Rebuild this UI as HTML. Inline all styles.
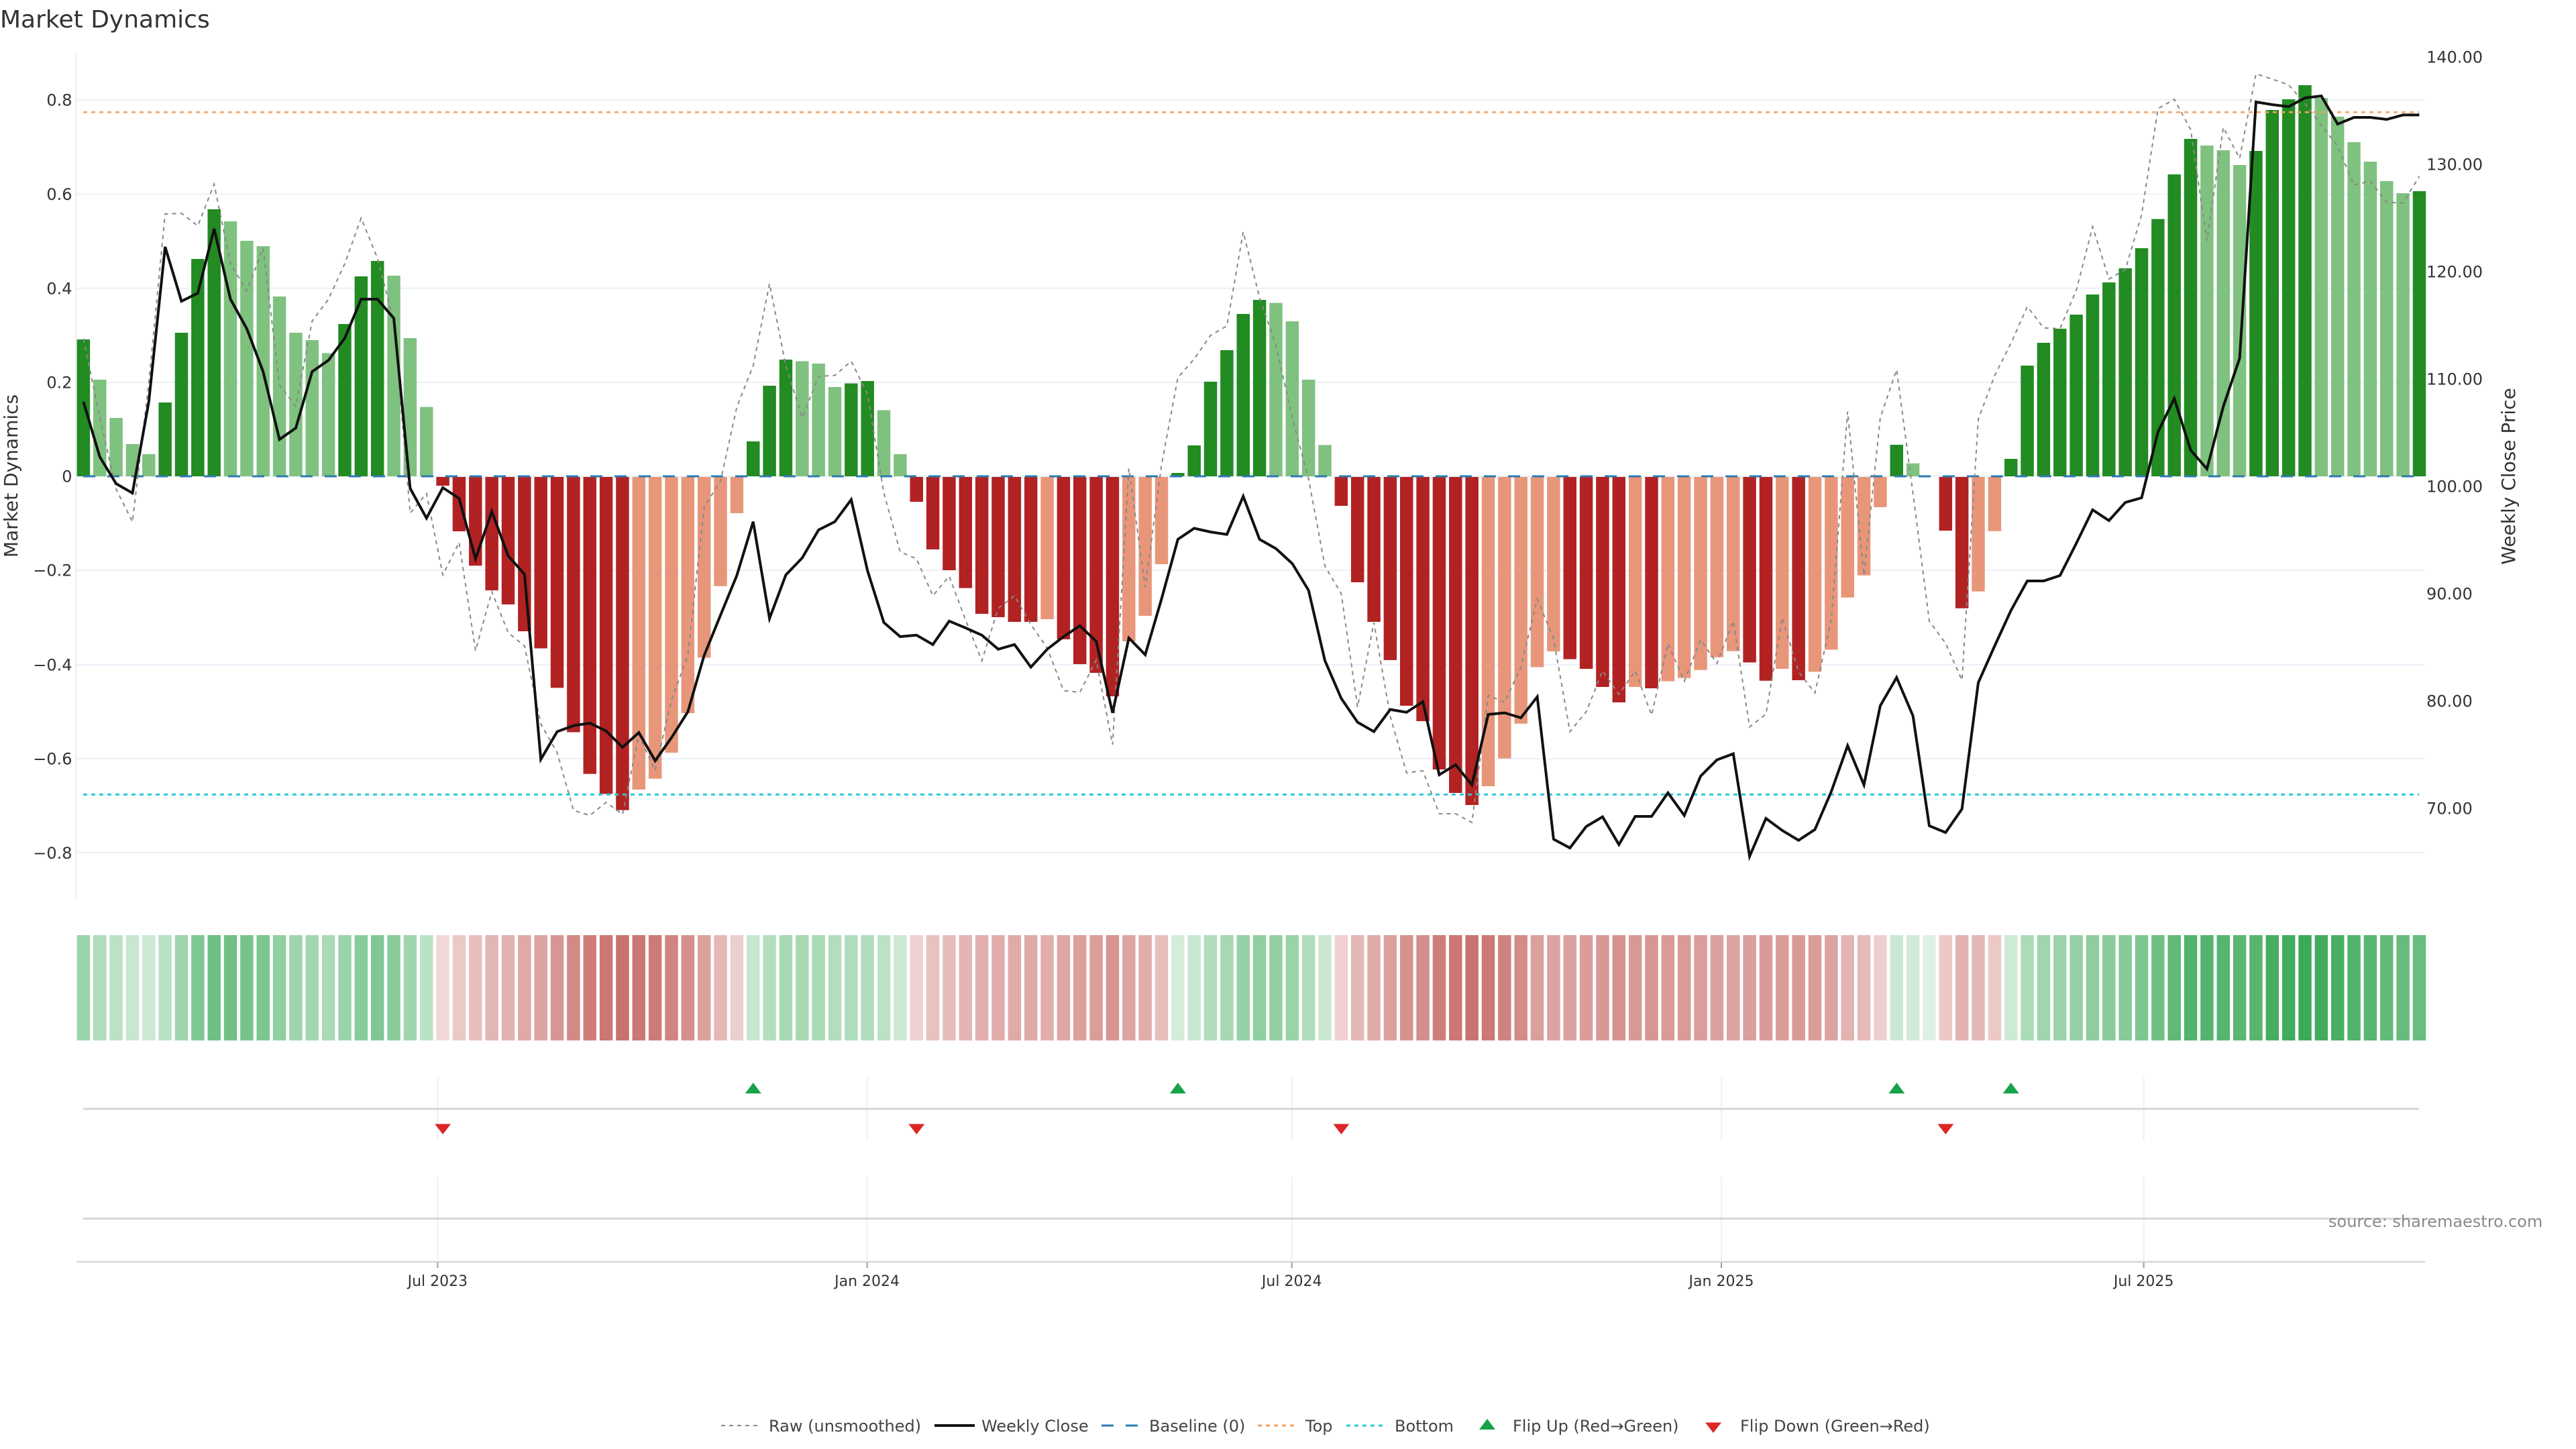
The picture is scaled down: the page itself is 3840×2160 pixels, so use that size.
<!DOCTYPE html>
<html lang="en"><head><meta charset="utf-8"><title>Market Dynamics</title>
<style>
html,body{margin:0;padding:0;background:#fff}
svg{display:block}
text{font-family:"DejaVu Sans",sans-serif;fill:#333}
.ns{fill:none;vector-effect:non-scaling-stroke}
.t{font-size:24px}
.l{font-size:24px;fill:#444}
.x{font-size:22px;text-anchor:middle}
</style></head><body>
<svg xmlns="http://www.w3.org/2000/svg" width="3840" height="2160" viewBox="0 0 3840 2160">
<rect width="3840" height="2160" fill="#fff"/>
<text x="0" y="41" style="font-size:36px">Market Dynamics</text>

<g stroke="#ebf0f8" stroke-width="2" fill="none">
<path d="M114 148.8H3615M114 289.5H3615M114 429.7H3615M114 570H3615M114 710H3615M114 850H3615M114 991H3615M114 1131H3615M114 1271H3615"/>
<path d="M113.5 80V1339" stroke-width="2.5"/>
<path d="M652.4 1606V1700M1292.6 1606V1700M1925.7 1606V1700M2566 1606V1700M3195.6 1606V1700M652.4 1754V1881M1292.6 1754V1881M1925.7 1754V1881M2566 1754V1881M3195.6 1754V1881"/>
</g>

<g transform="translate(124.4 0) scale(24.35 1)" fill="none" stroke-width=".8">
<path stroke="#228b22" d="M0 506V710M5 600V710M6 496V710M7 386V710M8 312V710M16 483V710M17 412V710M18 389V710M41 658V710M42 575V710M43 536V710M47 571.5V710M48 568V710M67 705V710M68 664V710M69 569V710M70 522V710M71 468V710M72 447V710M111 663V710M118 684V710M119 545V710M120 511V710M121 490V710M122 469V710M123 439V710M124 421V710M125 400V710M126 370V710M127 326.5V710M128 260V710M129 207V710M133 225V710M134 164V710M135 148V710M136 127V710M143 285V710"/>
<path stroke="#7fc17f" d="M1 566V710M2 623V710M3 662V710M4 677V710M9 330V710M10 359V710M11 367V710M12 442V710M13 496V710M14 507V710M15 526.5V710M19 411V710M20 504V710M21 606.6V710M44 538.5V710M45 542V710M46 577V710M49 611.5V710M50 677V710M73 451.5V710M74 479V710M75 566V710M76 663.4V710M112 690.7V710M130 217V710M131 224V710M132 246V710M137 146V710M138 174V710M139 212V710M140 241V710M141 270V710M142 288V710"/>
<path stroke="#b22222" d="M22 711V724M23 711V792M24 711V843.3M25 711V880M26 711V901M27 711V941M28 711V966.5M29 711V1025.4M30 711V1091.5M31 711V1153.6M32 711V1183.5M33 711V1207.6M51 711V748M52 711V819M53 711V850M54 711V876.6M55 711V915M56 711V920M57 711V927M58 711V927M60 711V953M61 711V990M62 711V1003M63 711V1038M77 711V754M78 711V868M79 711V927M80 711V984M81 711V1052M82 711V1075M83 711V1147M84 711V1182M85 711V1200M91 711V982.6M92 711V997M93 711V1024M94 711V1047M96 711V1026M102 711V987.5M103 711V1014.8M105 711V1014M114 711V791M115 711V906.8"/>
<path stroke="#e8967a" d="M34 711V1177M35 711V1160.7M36 711V1122M37 711V1063M38 711V980.5M39 711V873.8M40 711V765M59 711V923M64 711V956M65 711V918M66 711V841M86 711V1172M87 711V1130.6M88 711V1078.7M89 711V994.5M90 711V971M95 711V1024M97 711V1015.5M98 711V1010.6M99 711V998.7M100 711V979.8M101 711V970.6M104 711V997M106 711V1001.5M107 711V968.5M108 711V890.7M109 711V857.7M110 711V756M116 711V881.6M117 711V791.8"/>

<g stroke="#189a3a">
<path d="M0 1394V1551" stroke-opacity=".43"/><path d="M1 1394V1551" stroke-opacity=".34"/><path d="M2 1394V1551" stroke-opacity=".29"/><path d="M3 1394V1551" stroke-opacity=".24"/><path d="M4 1394V1551" stroke-opacity=".22"/><path d="M5 1394V1551" stroke-opacity=".3"/><path d="M6 1394V1551" stroke-opacity=".42"/><path d="M7 1394V1551" stroke-opacity=".55"/><path d="M8 1394V1551" stroke-opacity=".63"/><path d="M9 1394V1551" stroke-opacity=".62"/><path d="M10 1394V1551" stroke-opacity=".59"/><path d="M11 1394V1551" stroke-opacity=".57"/><path d="M12 1394V1551" stroke-opacity=".48"/><path d="M13 1394V1551" stroke-opacity=".42"/><path d="M14 1394V1551" stroke-opacity=".4"/><path d="M15 1394V1551" stroke-opacity=".37"/><path d="M16 1394V1551" stroke-opacity=".43"/><path d="M17 1394V1551" stroke-opacity=".51"/><path d="M18 1394V1551" stroke-opacity=".55"/><path d="M19 1394V1551" stroke-opacity=".51"/><path d="M20 1394V1551" stroke-opacity=".41"/><path d="M21 1394V1551" stroke-opacity=".29"/>
<path d="M41 1394V1551" stroke-opacity=".24"/><path d="M42 1394V1551" stroke-opacity=".33"/><path d="M43 1394V1551" stroke-opacity=".38"/><path d="M44 1394V1551" stroke-opacity=".38"/><path d="M45 1394V1551" stroke-opacity=".37"/><path d="M46 1394V1551" stroke-opacity=".33"/><path d="M47 1394V1551" stroke-opacity=".34"/><path d="M48 1394V1551" stroke-opacity=".34"/><path d="M49 1394V1551" stroke-opacity=".29"/><path d="M50 1394V1551" stroke-opacity=".22"/>
<path d="M67 1394V1551" stroke-opacity=".19"/><path d="M68 1394V1551" stroke-opacity=".23"/><path d="M69 1394V1551" stroke-opacity=".34"/><path d="M70 1394V1551" stroke-opacity=".39"/><path d="M71 1394V1551" stroke-opacity=".46"/><path d="M72 1394V1551" stroke-opacity=".48"/><path d="M73 1394V1551" stroke-opacity=".47"/><path d="M74 1394V1551" stroke-opacity=".44"/><path d="M75 1394V1551" stroke-opacity=".34"/><path d="M76 1394V1551" stroke-opacity=".23"/>
<path d="M111 1394V1551" stroke-opacity=".23"/><path d="M112 1394V1551" stroke-opacity=".2"/><path d="M113 1394V1551" stroke-opacity=".14"/>
<path d="M118 1394V1551" stroke-opacity=".21"/><path d="M119 1394V1551" stroke-opacity=".36"/><path d="M120 1394V1551" stroke-opacity=".41"/><path d="M121 1394V1551" stroke-opacity=".43"/><path d="M122 1394V1551" stroke-opacity=".46"/><path d="M123 1394V1551" stroke-opacity=".49"/><path d="M124 1394V1551" stroke-opacity=".51"/><path d="M125 1394V1551" stroke-opacity=".53"/><path d="M126 1394V1551" stroke-opacity=".57"/><path d="M127 1394V1551" stroke-opacity=".62"/><path d="M128 1394V1551" stroke-opacity=".69"/><path d="M129 1394V1551" stroke-opacity=".75"/><path d="M130 1394V1551" stroke-opacity=".74"/><path d="M131 1394V1551" stroke-opacity=".73"/><path d="M132 1394V1551" stroke-opacity=".71"/><path d="M133 1394V1551" stroke-opacity=".73"/><path d="M134 1394V1551" stroke-opacity=".8"/><path d="M135 1394V1551" stroke-opacity=".82"/><path d="M136 1394V1551" stroke-opacity=".84"/><path d="M137 1394V1551" stroke-opacity=".82"/><path d="M138 1394V1551" stroke-opacity=".79"/><path d="M139 1394V1551" stroke-opacity=".75"/><path d="M140 1394V1551" stroke-opacity=".72"/><path d="M141 1394V1551" stroke-opacity=".68"/><path d="M142 1394V1551" stroke-opacity=".66"/><path d="M143 1394V1551" stroke-opacity=".65"/>
</g>
<g stroke="#b02e28">
<path d="M22 1394V1551" stroke-opacity=".18"/><path d="M23 1394V1551" stroke-opacity=".26"/><path d="M24 1394V1551" stroke-opacity=".31"/><path d="M25 1394V1551" stroke-opacity=".35"/><path d="M26 1394V1551" stroke-opacity=".37"/><path d="M27 1394V1551" stroke-opacity=".41"/><path d="M28 1394V1551" stroke-opacity=".44"/><path d="M29 1394V1551" stroke-opacity=".5"/><path d="M30 1394V1551" stroke-opacity=".56"/><path d="M31 1394V1551" stroke-opacity=".62"/><path d="M32 1394V1551" stroke-opacity=".65"/><path d="M33 1394V1551" stroke-opacity=".68"/><path d="M34 1394V1551" stroke-opacity=".65"/><path d="M35 1394V1551" stroke-opacity=".63"/><path d="M36 1394V1551" stroke-opacity=".59"/><path d="M37 1394V1551" stroke-opacity=".53"/><path d="M38 1394V1551" stroke-opacity=".45"/><path d="M39 1394V1551" stroke-opacity=".34"/><path d="M40 1394V1551" stroke-opacity=".23"/>
<path d="M51 1394V1551" stroke-opacity=".22"/><path d="M52 1394V1551" stroke-opacity=".29"/><path d="M53 1394V1551" stroke-opacity=".32"/><path d="M54 1394V1551" stroke-opacity=".35"/><path d="M55 1394V1551" stroke-opacity=".38"/><path d="M56 1394V1551" stroke-opacity=".39"/><path d="M57 1394V1551" stroke-opacity=".4"/><path d="M58 1394V1551" stroke-opacity=".4"/><path d="M59 1394V1551" stroke-opacity=".39"/><path d="M60 1394V1551" stroke-opacity=".42"/><path d="M61 1394V1551" stroke-opacity=".46"/><path d="M62 1394V1551" stroke-opacity=".47"/><path d="M63 1394V1551" stroke-opacity=".51"/><path d="M64 1394V1551" stroke-opacity=".43"/><path d="M65 1394V1551" stroke-opacity=".39"/><path d="M66 1394V1551" stroke-opacity=".31"/>
<path d="M77 1394V1551" stroke-opacity=".22"/><path d="M78 1394V1551" stroke-opacity=".34"/><path d="M79 1394V1551" stroke-opacity=".4"/><path d="M80 1394V1551" stroke-opacity=".45"/><path d="M81 1394V1551" stroke-opacity=".52"/><path d="M82 1394V1551" stroke-opacity=".54"/><path d="M83 1394V1551" stroke-opacity=".62"/><path d="M84 1394V1551" stroke-opacity=".65"/><path d="M85 1394V1551" stroke-opacity=".67"/><path d="M86 1394V1551" stroke-opacity=".64"/><path d="M87 1394V1551" stroke-opacity=".6"/><path d="M88 1394V1551" stroke-opacity=".55"/><path d="M89 1394V1551" stroke-opacity=".46"/><path d="M90 1394V1551" stroke-opacity=".44"/><path d="M91 1394V1551" stroke-opacity=".45"/><path d="M92 1394V1551" stroke-opacity=".47"/><path d="M93 1394V1551" stroke-opacity=".49"/><path d="M94 1394V1551" stroke-opacity=".52"/><path d="M95 1394V1551" stroke-opacity=".49"/><path d="M96 1394V1551" stroke-opacity=".5"/><path d="M97 1394V1551" stroke-opacity=".48"/><path d="M98 1394V1551" stroke-opacity=".48"/><path d="M99 1394V1551" stroke-opacity=".47"/><path d="M100 1394V1551" stroke-opacity=".45"/><path d="M101 1394V1551" stroke-opacity=".44"/><path d="M102 1394V1551" stroke-opacity=".46"/><path d="M103 1394V1551" stroke-opacity=".48"/><path d="M104 1394V1551" stroke-opacity=".47"/><path d="M105 1394V1551" stroke-opacity=".48"/><path d="M106 1394V1551" stroke-opacity=".47"/><path d="M107 1394V1551" stroke-opacity=".44"/><path d="M108 1394V1551" stroke-opacity=".36"/><path d="M109 1394V1551" stroke-opacity=".33"/><path d="M110 1394V1551" stroke-opacity=".23"/>
<path d="M114 1394V1551" stroke-opacity=".26"/><path d="M115 1394V1551" stroke-opacity=".36"/><path d="M116 1394V1551" stroke-opacity=".34"/><path d="M117 1394V1551" stroke-opacity=".26"/>
</g>
</g>

<path d="M124 710H3606" stroke="#2b7bb0" stroke-width="3" stroke-dasharray="18 18" fill="none"/>
<path d="M124 167.3H3606" stroke="#f4a261" stroke-opacity=".9" stroke-width="3" stroke-dasharray="6 6" fill="none"/>
<path d="M124 1184.4H3606" stroke="#2cc8d8" stroke-width="3" stroke-dasharray="6 6" fill="none"/>

<g transform="translate(124.4 0) scale(24.35 1)">
<polyline class="ns" stroke="#888" stroke-width="2" stroke-dasharray="6 6" points="0,505 1,622 2,729 3,778 4,571 5,319 6,318 7,336.7 8,274.5 9,393 10,433.7 11,370 12,574 13,605.6 14,478.6 15,446 16,393 17,325 18,385 19,479.6 20,765 21,735.7 22,857 23,808.5 24,970 25,882 26,943 27,963 28,1079 29,1122 30,1208 31,1215.6 32,1196 33,1214 34,1095 35,1148.6 36,1043.6 37,977 38,756 39,717 40,606.6 41,545.5 42,422.8 43,545.5 44,622.7 45,561 46,559.6 47,538.5 48,587.6 49,735 50,822.6 51,833 52,888 53,859 54,924 55,985 56,906.8 57,888 58,931 59,966 60,1029.6 61,1032 62,984 63,1110 64,698.5 65,875 66,692.8 67,563 68,535 69,500 70,486 71,345.6 72,443.8 73,514 74,622.7 75,714 76,843.7 77,885 78,1054 79,928 80,1068 81,1152 82,1149 83,1213 84,1213 85,1226 86,1036.6 87,1047 88,994.5 89,892.8 90,952 91,1090.6 92,1061 93,1000 94,1035 95,1000 96,1066 97,959 98,1015.5 99,953.8 100,989 101,925.8 102,1083.6 103,1064.6 104,920.8 105,1001.5 106,1033 107,924 108,613.6 109,857.7 110,622.7 111,551 112,735 113,925.8 114,959 115,1014 116,625 117,560 118,511.7 119,457 120,488.8 121,490 122,432.6 123,338 124,416 125,402 126,320 127,162 128,148 129,193 130,358.7 131,190 132,236 133,110 134,118 135,126.5 136,154.6 137,186.7 138,218 139,276 140,270 141,301.5 142,302.6 143,262.8"/>
<polyline class="ns" stroke="#111" stroke-width="4" points="0,599 1,681 2,721 3,735 4,599 5,368 6,449 7,437 8,341 9,446 10,490 11,554 12,655 13,638 14,554 15,537 16,504 17,446 18,446 19,474.5 20,728 21,772.4 22,727 23,743 24,833 25,762.5 26,828.6 27,856 28,1132 29,1090.6 30,1081.7 31,1078 32,1089.7 33,1114 34,1092 35,1134 36,1099.7 37,1061 38,977 39,917 40,857.7 41,777.7 42,922 43,857 44,831.7 45,790 46,777.7 47,744.8 48,850.7 49,928 50,949 51,946.8 52,960.8 53,925.8 54,936 55,946.8 56,967.8 57,960.8 58,994.5 59,967.8 60,949 61,932.8 62,956 63,1062.6 64,951 65,976 66,892.8 67,804 68,787.5 69,793 70,796.7 71,739.8 72,804 73,817.7 74,840 75,880 76,984.7 77,1041 78,1076.6 79,1090.6 80,1057.6 81,1061.8 82,1046 83,1155 84,1140 85,1170 86,1065 87,1062.6 88,1070 89,1038.7 90,1251 91,1264 92,1232 93,1217.6 94,1259 95,1217 96,1217 97,1181.8 98,1215.5 99,1157 100,1132.7 101,1123.6 102,1276.5 103,1220 104,1238 105,1252.6 106,1236.5 107,1180 108,1111.6 109,1170 110,1052 111,1010 112,1067 113,1231 114,1241 115,1206 116,1017.6 117,963 118,910 119,866 120,866 121,858 122,810 123,760 124,776 125,749 126,742 127,644 128,594 129,671 130,699 131,606 132,534 133,152 134,156 135,159 136,146 137,143 138,185 139,175 140,175 141,178 142,171.4 143,171.4"/>
</g>

<g stroke="#d6d6d6" stroke-width="3" fill="none">
<path d="M124 1653H3606M124 1816.6H3606"/>
<path d="M114 1881H3615" stroke-width="2.5"/>
</g>
<path d="M652.4 1882V1890M1292.6 1882V1890M1925.7 1882V1890M2566 1882V1890M3195.6 1882V1890" stroke="#999" stroke-width="2" fill="none"/>

<g fill="#16a34a">
<path d="M1122.8 1614l12 16h-24z"/><path d="M1755.9 1614l12 16h-24z"/><path d="M2827.3 1614l12 16h-24z"/><path d="M2997.7 1614l12 16h-24z"/>
<path d="M2217 2115l12 16h-24z"/>
</g>
<g fill="#dc2626">
<path d="M660.1 1691l12-15.5h-24z"/><path d="M1366.3 1691l12-15.5h-24z"/><path d="M1999.4 1691l12-15.5h-24z"/><path d="M2900.3 1691l12-15.5h-24z"/>
<path d="M2554 2136l12-15.5h-24z"/>
</g>

<g class="t" text-anchor="end">
<text class="t" x="107.5" y="157.4">0.8</text>
<text class="t" x="107.5" y="298">0.6</text>
<text class="t" x="107.5" y="438.3">0.4</text>
<text class="t" x="107.5" y="578.6">0.2</text>
<text class="t" x="107.5" y="718.6">0</text>
<text class="t" x="107.5" y="858.7">−0.2</text>
<text class="t" x="107.5" y="999.3">−0.4</text>
<text class="t" x="107.5" y="1139.6">−0.6</text>
<text class="t" x="107.5" y="1279.9">−0.8</text>
</g>
<g>
<text class="t" x="3617" y="93.6">140.00</text>
<text class="t" x="3617" y="253.6">130.00</text>
<text class="t" x="3617" y="413.6">120.00</text>
<text class="t" x="3617" y="573.6">110.00</text>
<text class="t" x="3617" y="733.6">100.00</text>
<text class="t" x="3617" y="893.6">90.00</text>
<text class="t" x="3617" y="1053.6">80.00</text>
<text class="t" x="3617" y="1213.6">70.00</text>
</g>
<text transform="translate(26 709.5) rotate(-90)" text-anchor="middle" style="font-size:28px">Market Dynamics</text>
<text transform="translate(3749 710) rotate(-90)" text-anchor="middle" style="font-size:28px">Weekly Close Price</text>

<text class="x" x="652.4" y="1917">Jul 2023</text>
<text class="x" x="1292.6" y="1917">Jan 2024</text>
<text class="x" x="1925.7" y="1917">Jul 2024</text>
<text class="x" x="2566" y="1917">Jan 2025</text>
<text class="x" x="3195.6" y="1917">Jul 2025</text>

<text x="3471" y="1829" style="font-size:24px;fill:#8a8a8a">source: sharemaestro.com</text>

<g fill="none">
<path d="M1075 2125H1133" stroke="#888" stroke-width="2" stroke-dasharray="6 6"/>
<path d="M1393 2125H1453" stroke="#111" stroke-width="4"/>
<path d="M1642 2125H1698" stroke="#2b7bb0" stroke-width="3" stroke-dasharray="18 18"/>
<path d="M1875 2125H1931" stroke="#f4a261" stroke-width="3" stroke-dasharray="6 6"/>
<path d="M2007 2125H2063" stroke="#2cc8d8" stroke-width="3" stroke-dasharray="6 6"/>
</g>
<text class="l" x="1146" y="2134">Raw (unsmoothed)</text>
<text class="l" x="1463" y="2134">Weekly Close</text>
<text class="l" x="1713" y="2134">Baseline (0)</text>
<text class="l" x="1946" y="2134">Top</text>
<text class="l" x="2079" y="2134">Bottom</text>
<text class="l" x="2255" y="2134">Flip Up (Red→Green)</text>
<text class="l" x="2594" y="2134">Flip Down (Green→Red)</text>
</svg>
</body></html>
